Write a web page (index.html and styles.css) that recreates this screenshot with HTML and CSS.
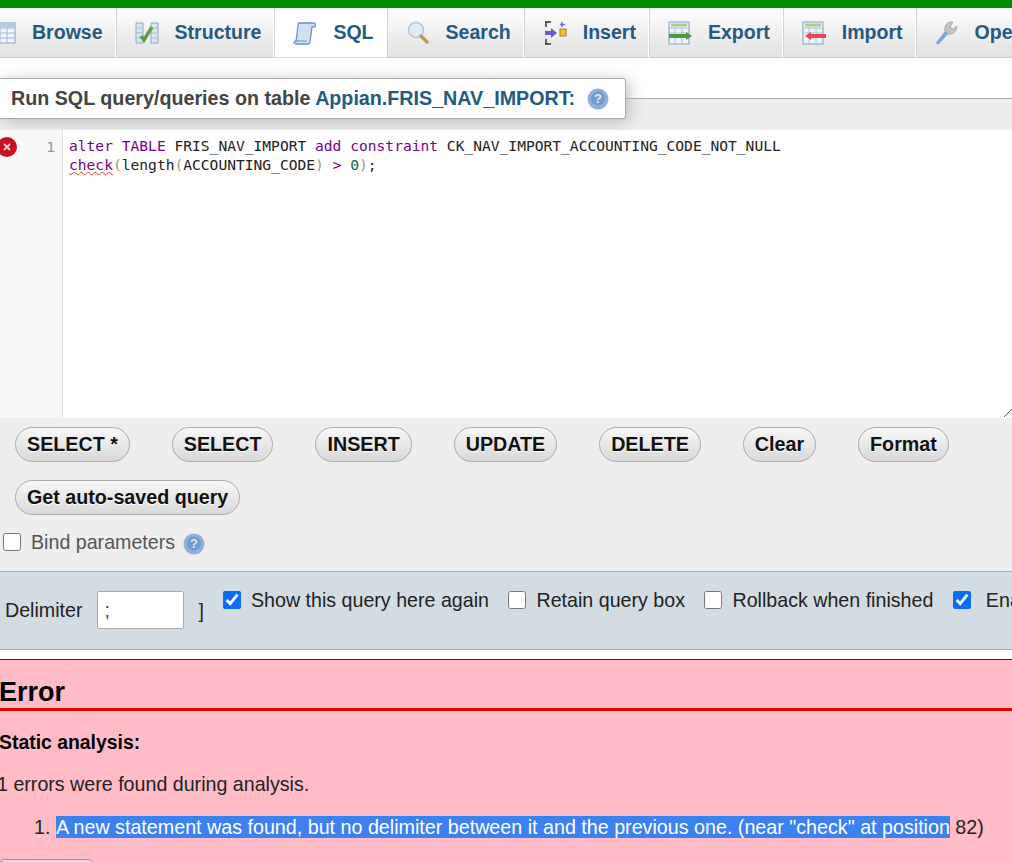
FILE: index.html

```html
<!DOCTYPE html>
<html lang="en">
<head>
  <meta charset="UTF-8" />
  <title>phpMyAdmin SQL</title>
  <link rel="stylesheet" href="styles.css">
</head>
<body>
  <div class="topbar"></div>

  <ul class="tabs">
    <li class="tab">
      <svg class="tab-icon" viewBox="0 0 24 24"><rect x="1" y="2" width="22" height="20" fill="#f4f8fc" stroke="#7f9fc4"/><path d="M1 7h22M1 12h22M1 17h22M8 7v15M15 7v15" stroke="#9db8d6" fill="none"/><rect x="1.500" y="2.500" width="21" height="4" fill="#b4cbe4"/></svg>
      Browse
    </li>
    <li class="tab">
      <svg class="tab-icon" viewBox="0 0 24 24"><path d="M1 2h7v20H1zM16 2h7v20h-7z" fill="#dbe6f2" stroke="#8fa9c6"/><path d="M1 7h7M1 12h7M1 17h7M16 7h7M16 12h7M16 17h7" stroke="#a9bdd3"/><path d="M6 15l3 4 8-13" fill="none" stroke="#5f9e45" stroke-width="3.500"/></svg>
      Structure
    </li>
    <li class="tab tab-active">
      <svg class="tab-icon" viewBox="0 0 24 24"><path d="M6 2h15c2 0 2 4 0 4h-2l-2 15c0 2-2 2-3 2H3c-2 0-3-3 0-3l2-15c0-2 0-3 1-3z" fill="#cfe0f3" stroke="#6d94c4" stroke-width="1.300"/><path d="M3 20h11" stroke="#6d94c4"/></svg>
      SQL
    </li>
    <li class="tab">
      <svg class="tab-icon" viewBox="0 0 24 24"><circle cx="10" cy="9" r="7.500" fill="#dfeaf5" stroke="#b6c6d6" stroke-width="1.500"/><path d="M15 15l6 6" stroke="#c79558" stroke-width="3.500" stroke-linecap="round"/></svg>
      Search
    </li>
    <li class="tab">
      <svg class="tab-icon" viewBox="0 0 24 24"><path d="M2 1h6M2 23h6M3 1v5M3 18v5" stroke="#333" stroke-width="1.500" fill="none"/><path d="M14 12l-6-5v3H2v4h6v3z" fill="#6a5acd"/><rect x="17" y="8" width="6" height="7" fill="#f0c040" stroke="#a08020"/><path d="M19 1v5M17 3.500h5" stroke="#7a6ad0" stroke-width="1.500"/></svg>
      Insert
    </li>
    <li class="tab">
      <svg class="tab-icon" viewBox="0 0 24 24"><rect x="1" y="1" width="20" height="22" fill="#eef4fa" stroke="#7f9fc4"/><path d="M1 7h20M1 12h20M7 7v15M14 7v15" stroke="#a9c0da"/><rect x="3" y="2.500" width="16" height="3" fill="#a8cf8e"/><path d="M1 13h17v-2l6 4-6 4v-2H1z" fill="#4f9a3a"/></svg>
      Export
    </li>
    <li class="tab">
      <svg class="tab-icon" viewBox="0 0 24 24"><rect x="1" y="1" width="20" height="22" fill="#eef4fa" stroke="#7f9fc4"/><path d="M1 7h20M1 12h20M7 7v15M14 7v15" stroke="#a9c0da"/><rect x="3" y="2.500" width="16" height="3" fill="#a8cf8e"/><path d="M24 13H9v-2l-6 4 6 4v-2h15z" fill="#e2474b"/></svg>
      Import
    </li>
    <li class="tab">
      <svg class="tab-icon" viewBox="0 0 24 24"><path d="M1.500 21c-1 1 1 3 2.500 2L13 13l-3-3z" fill="#7da6d8"/><path d="M10 10l3 3c4 1 9-2 9-8l-4 3-3-2 3-5c-5-1-9 3-8 9z" fill="#c2c2c2" stroke="#999" stroke-width=".7"/></svg>
      Operations
    </li>
  </ul>

  <div class="query-box">
    <div class="legend-row">
      <h2 class="legend"><span>Run SQL query/queries on table <a href="#">Appian.FRIS_NAV_IMPORT:</a></span>
        <svg class="help" viewBox="0 0 22 22"><circle cx="11" cy="11" r="10.500" fill="#8fb0dc"/><circle cx="11" cy="10.500" r="7" fill="#6f9bd1"/><text x="11" y="15" text-anchor="middle" class="help-mark">?</text></svg>
      </h2>
    </div>

    <div class="editor">
      <div class="gutter">
        <svg class="err-mark" viewBox="0 0 20 20"><circle cx="10" cy="10" r="10" fill="#c4121f"/><path d="M7 7l6 6M13 7l-6 6" stroke="#f6d2d2" stroke-width="1.800"/></svg>
        <span class="line-no">1</span>
      </div>
      <pre class="code"><span class="kw">alter</span> <span class="kw">TABLE</span> FRIS_NAV_IMPORT <span class="kw">add</span> <span class="kw">constraint</span> CK_NAV_IMPORT_ACCOUNTING_CODE_NOT_NULL
<span class="kw squiggle">check</span><span class="br">(</span>length<span class="br">(</span>ACCOUNTING_CODE<span class="br">)</span> <span class="kw">&gt;</span> <span class="num">0</span><span class="br">)</span>;</pre>
      <svg class="resizer" viewBox="0 0 8 8"><path d="M0 8L8 0" stroke="#666" fill="none"/></svg>
    </div>

    <div class="btn-row">
      <button class="pill">SELECT *</button>
      <button class="pill">SELECT</button>
      <button class="pill">INSERT</button>
      <button class="pill">UPDATE</button>
      <button class="pill">DELETE</button>
      <button class="pill">Clear</button>
      <button class="pill">Format</button>
      <button class="pill">Get auto-saved query</button>
    </div>

    <label class="bind">
      <input type="checkbox" class="check">
      Bind parameters
      <svg class="help help-bind" viewBox="0 0 22 22"><circle cx="11" cy="11" r="10.500" fill="#8fb0dc"/><circle cx="11" cy="10.500" r="7" fill="#6f9bd1"/><text x="11" y="15" text-anchor="middle" class="help-mark">?</text></svg>
    </label>
  </div>

  <div class="options">
    <span class="delim">Delimiter</span>
    <input class="delim-input" type="text" value=";">
    <span class="bracket">]</span>
    <label class="opt"><input type="checkbox" class="check" checked>Show this query here again</label>
    <label class="opt"><input type="checkbox" class="check">Retain query box</label>
    <label class="opt"><input type="checkbox" class="check">Rollback when finished</label>
    <label class="opt opt-last"><input type="checkbox" class="check" checked>Enable foreign key checks</label>
  </div>

  <div class="error">
    <h1 class="error-title">Error</h1>
    <p class="static">Static analysis:</p>
    <p class="found">1 errors were found during analysis.</p>
    <ol class="error-list">
      <li><span class="selected">A new statement was found, but no delimiter between it and the previous one. (near "check" at position</span> 82)</li>
    </ol>
    <div class="peek"></div>
  </div>
</body>
</html>
```

FILE: styles.css

```css
* { margin: 0; padding: 0; box-sizing: border-box; }
html, body {
  height: 100%;
  overflow: hidden;
}
body {
  font-family: 'Liberation Sans', Arial, sans-serif;
  font-size: 19.650px;
  color: #222;
  background: #fff;
}
.topbar {
  height: 8px;
  background: #008a00;
}

.tabs {
  display: flex;
  list-style: none;
  height: 50px;
  margin-left: -27px;
  width: 1200px;
}
.tab {
  display: flex;
  align-items: center;
  gap: 16px;
  padding: 0 12px 0 18px;
  border-right: 1px solid #fff;
  border-bottom: 1px solid #ccc;
  border-left: 1px solid #d5d5d5;
  background: linear-gradient(#fdfdfd, #e2e2e2);
  color: #235a81;
  font-size: 19.550px;
  font-weight: bold;
  white-space: nowrap;
}
.tab-active {
  background: #fff;
  border-bottom: 1px solid #ddd;
}
.tab-icon {
  width: 24px;
  height: 24px;
  flex: none;
}

.query-box {
  background: #eee;
  margin-top: 20px;
}
.legend-row {
  background: linear-gradient(#fff 20px, #aaa 20px, #aaa 21px, #eee 21px);
  height: 52px;
}
.legend {
  display: inline-flex;
  align-items: center;
  gap: 12px;
  width: 626px;
  height: 41px;
  padding-left: 11px;
  background: #fff;
  border: 1px solid #aaa;
  border-left: 0;
  border-radius: 0 3px 3px 0;
  box-shadow: 3px 3px 15px #bbb;
  color: #444;
  font-size: 19.700px;
  font-weight: bold;
  white-space: nowrap;
}
.legend a {
  color: #235a81;
  text-decoration: none;
}
.help {
  width: 22px;
  height: 22px;
  flex: none;
}
.help-mark {
  fill: #dfe9f6;
  font-size: 13px;
  font-weight: bold;
}

.editor {
  display: flex;
  position: relative;
  height: 288px;
  background: #fff;
}
.gutter {
  display: flex;
  justify-content: space-between;
  width: 63px;
  flex: none;
  padding-right: 7px;
  background: #f7f7f7;
  border-right: 1px solid #ddd;
}
.err-mark {
  width: 20px;
  height: 20px;
  margin-top: 7px;
  margin-left: -3px;
}
.line-no {
  padding-top: 7px;
  color: #999;
  font-family: 'DejaVu Sans Mono', monospace;
  font-size: 14.600px;
  line-height: 19px;
}
.code {
  padding: 6px 0 0 6px;
  color: #222;
  font-family: 'DejaVu Sans Mono', monospace;
  font-size: 14.600px;
  line-height: 19px;
}
.kw { color: #708; }
.br { color: #999977; }
.num { color: #116644; }
.squiggle { text-decoration: underline wavy #e33; text-decoration-thickness: 1px; }
.resizer {
  position: absolute;
  right: 0;
  bottom: 1px;
  width: 8px;
  height: 8px;
}

.btn-row {
  display: flex;
  flex-wrap: wrap;
  column-gap: 42px;
  row-gap: 18px;
  padding: 9px 0 0 15px;
  width: 1000px;
}
.pill {
  height: 35px;
  padding: 0 11px;
  border: 1px solid #aaa;
  border-radius: 18px;
  background: linear-gradient(#f8f8f8, #d8d8d8);
  color: #111;
  font-family: inherit;
  font-size: 19.700px;
  font-weight: bold;
  text-shadow: 0 1px 0 #fff;
}

.bind {
  display: flex;
  align-items: center;
  height: 24px;
  margin-top: 15px;
  padding-left: 3px;
  padding-bottom: 17px;
  box-sizing: content-box;
  color: #555;
}
.check {
  appearance: auto;
  width: 18px;
  height: 18px;
  margin-right: 10px;
  accent-color: #0b6ef0;
  flex: none;
}
.help-bind {
  margin-left: 8px;
  margin-top: 3px;
}

.options {
  display: flex;
  height: 79px;
  padding: 17px 0 0 5px;
  background: #d3dce3;
  border-top: 1px solid #aaa;
  border-bottom: 1px solid #aaa;
  white-space: nowrap;
}
.delim {
  margin-top: 10px;
  margin-right: 15px;
}
.delim-input {
  width: 87px;
  height: 38px;
  margin-top: 2px;
  padding-left: 6px;
  border: 1px solid #aaa;
  border-radius: 2px;
  color: #444;
  font-family: inherit;
  font-size: 19.650px;
}
.bracket {
  margin-top: 11px;
  margin-left: 14px;
  margin-right: 19px;
}
.opt {
  display: flex;
  align-items: flex-start;
  margin-right: 19.500px;
}
.opt .check {
  margin-top: 2px;
}
.opt-last .check {
  margin-right: 15px;
}

.error {
  margin-top: 9px;
  height: 210px;
  background: #ffbcc7;
  border-top: 1px solid #8b0000;
}
.error-title {
  height: 51px;
  padding-top: 17px;
  text-indent: -1px;
  color: #000;
  font-size: 27px;
  line-height: 30px;
  border-bottom: 3px solid #e00000;
}
.static {
  margin-top: 19px;
  margin-left: -1px;
  color: #000;
  font-size: 19.400px;
  font-weight: bold;
  line-height: 24px;
}
.found {
  margin-top: 18px;
  margin-left: -3px;
  line-height: 24px;
}
.error-list {
  margin-top: 19px;
  padding-left: 56px;
  font-size: 19.700px;
  line-height: 24px;
  white-space: nowrap;
}
.selected {
  background: #3b82f0;
  color: #fff;
}
.peek {
  width: 93px;
  height: 10px;
  margin-top: 20px;
  border: 1px solid #999;
  border-radius: 4px;
  background: #ddd;
}
```
